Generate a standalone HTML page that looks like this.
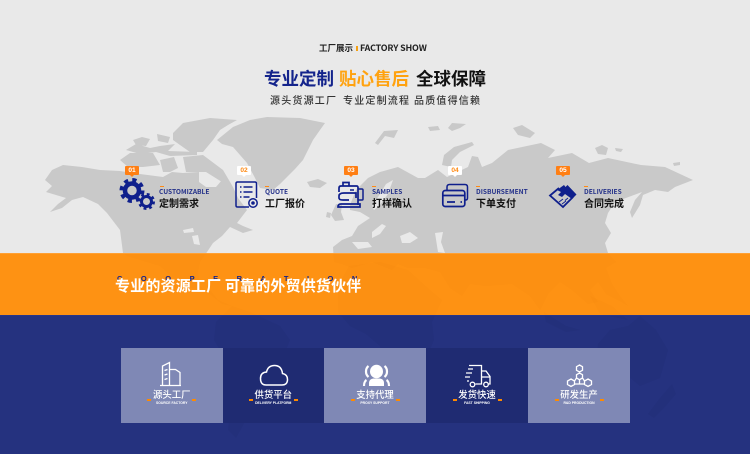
<!DOCTYPE html>
<html lang="zh"><head><meta charset="utf-8"><style>
html,body{margin:0;padding:0}
body{width:750px;height:454px;overflow:hidden;position:relative;background:#e9e9e9;font-family:"Liberation Sans","Noto Sans CJK SC",sans-serif}
svg.bg,svg.ic{position:absolute;left:0;top:0}
.t{position:absolute;white-space:nowrap;font-family:"Noto Sans CJK SC","Liberation Sans",sans-serif;line-height:1}
.badge{position:absolute;top:166px;width:14px;height:9px;border-radius:1px;background:#ff7f14;color:#fff;font:700 6.6px/9px "Liberation Sans",sans-serif;text-align:center}
.badge:after{content:"";position:absolute;left:5px;top:9px;border:2px solid transparent;border-top-color:#ff7f14;border-bottom:0}
.badge.w{background:#fff;color:#ff8a14}.badge.w:after{border-top-color:#fff}
.bar{position:absolute;top:186px;width:4px;height:1px;background:#ff8a14}
.en{top:188.3px;font-size:6.6px;font-weight:700;color:#25328a}
.cn{top:198px;font-size:10px;font-weight:700;color:#111}
.card{position:absolute;top:348px;height:75px}
.cl{position:absolute;left:0;right:0;top:41px;text-align:center;color:#fff;font:500 9.4px/11px "Noto Sans CJK SC",sans-serif}
.cs{position:absolute;left:0;right:0;top:53px;text-align:center;color:#fff;font:700 3.4px/5px "Liberation Sans",sans-serif}
.d{position:absolute;top:51px;width:4px;height:2px;background:#ff8a00}
</style></head><body>
<svg class="bg" width="750" height="454" viewBox="0 0 750 454">
<defs><g id="m">
<path d="M45 180L52 170 63 165 82 167 100 170 120 171 140 174 163 177 172 172 183 173 199 172 199 182 206 187 216 187 222 180 233 187 238 198 247 210 237 223 243 226 253 230 243 233 230 227 222 236 213 243 207 252 200 262 198 272 200 286 212 296 222 304 232 306 218 300 210 290 190 288 176 280 160 266 127 256 123 253 120 230 107 213 98 204 83 197 72 200 62 208 50 212 58 204 66 198 56 195 46 192 52 186Z"/>
<path d="M217 140L233 127 250 120 267 117 300 118 325 123 320 130 313 140 308 150 303 160 295 169 287 177 280 184 273 190 260 188 254 176 247 163 240 155 233 147 222 144Z"/>
<path d="M173 133L183 123 210 118 237 120 228 125 220 130 213 140 203 152 190 152 180 145 173 140Z"/>
<path d="M133 140L142 137 150 139 146 146 136 145ZM157 134L170 137 168 143 158 141ZM126 150L136 144 150 148 160 146 175 144 168 151 197 152 197 155 170 156 156 152 140 154Z"/>
<path d="M120 160L130 153 153 153 160 165 143 167 128 167ZM160 160L174 157 178 168 170 172 163 172ZM183 157L203 155 223 170 233 187 222 182 206 172 197 172 186 172Z"/>
<path d="M307 182L318 179 327 183 320 188 310 187Z"/><path d="M331 215L336 204 342 205 341 212 344 220 335 221Z"/><path d="M327 212L331 213 330 218 326 217Z"/>
<path d="M350 205L356 190 368 178 380 172 398 167 418 178 425 178 438 170 447 177 468 167 472 156 478 157 482 167 492 163 508 150 541 143 555 150 548 158 572 153 589 163 608 158 641 165 665 167 693 180 675 187 668 192 655 190 643 195 640 205 632 218 630 212 635 200 642 192 615 202 608 213 605 223 611 233 605 243 608 253 616 262 606 268 612 284 620 296 628 306 618 300 606 294 598 282 590 290 598 302 588 304 572 290 560 282 548 294 540 310 530 296 512 284 486 286 470 284 462 296 450 288 440 272 425 268 408 268 398 264 392 270 372 262 352 268 342 264 334 262 333 247 342 240 352 236 358 226 370 218 360 212 350 210Z"/>
<path d="M349 266L380 262 408 270 430 290 442 300 432 322 434 340 420 372 406 400 392 402 384 376 380 346 366 334 350 326 338 312 338 286Z"/>
<path d="M232 306L250 312 280 326 290 340 278 370 262 392 246 420 236 438 228 430 232 400 226 360 214 340 216 322Z"/>
<path d="M610 330L628 326 640 316 656 330 668 350 660 378 640 386 628 376 606 382 596 370 598 344Z"/><path d="M590 296L612 306 628 320 600 314ZM544 312L566 326 580 330 566 332 546 322Z"/>
<path d="M648 414L660 398 672 384 676 394 664 408 654 418Z"/>
<path d="M375 143L384 131 398 130 394 138 385 136 378 145Z"/><path d="M428 127L438 126 440 130 430 131ZM448 128L452 123 466 124 460 128 452 131Z"/><path d="M513 128L522 125 535 133 530 138 518 135Z"/><path d="M442 165L444 155 454 147 472 142 474 145 460 152 452 160 451 167Z"/><path d="M595 148L602 145 608 148 606 155 598 154ZM615 148L623 149 621 152 616 151ZM673 163L680 162 680 165 674 166Z"/>
</g></defs>
<use href="#m" fill="#c9c9c9"/>
<path d="M400 236L410 232 418 238 410 243 402 243ZM435 233L443 232 441 242 445 253 438 252ZM372 232L382 224 386 226 380 234 372 238ZM352 242L368 242 372 247 358 249ZM393 180L388 194 380 205 374 210 372 206 380 194 386 184Z" fill="#e9e9e9"/>
<path d="M183 230L193 228 194 232 184 233ZM192 236L198 235 200 245 194 244Z" fill="#e9e9e9"/>
<rect y="253" width="750" height="62" fill="#fe9213"/><rect y="253" width="750" height="1" fill="#ffa033"/>
<rect y="315" width="750" height="139" fill="#25327f"/><rect y="315" width="750" height="1" fill="#27358a"/>
<clipPath id="o"><rect y="254" width="750" height="61"/></clipPath><clipPath id="b"><rect y="316" width="750" height="138"/></clipPath>
<g clip-path="url(#o)"><use href="#m" fill="#e88411" fill-opacity=".08"/></g>
<g clip-path="url(#b)"><use href="#m" fill="#1d2a70" fill-opacity=".2"/></g>
</svg>

<div class="t" style="left:319px;top:43.5px;font-size:8.5px;font-weight:700;color:#222">工厂展示</div>
<div style="position:absolute;left:356px;top:46px;width:1.5px;height:5px;background:#f5a114"></div>
<div class="t" style="left:360px;top:43.500px;font-size:8.9px;font-weight:700;color:#222;letter-spacing:-.15px">FACTORY SHOW</div>
<div class="t" style="left:264px;top:70px;font-size:17.5px;font-weight:700;color:#14248c">专业定制</div>
<div class="t" style="left:339px;top:70px;font-size:17.5px;font-weight:700;color:#ffa20f">贴心售后</div>
<div class="t" style="left:416px;top:70px;font-size:17.5px;font-weight:700;color:#111">全球保障</div>
<div class="t" style="left:270px;top:95px;font-size:10px;letter-spacing:1.2px;font-weight:500;color:#333">源头货源工厂</div>
<div class="t" style="left:343px;top:95px;font-size:10px;letter-spacing:1.2px;font-weight:500;color:#333">专业定制流程</div>
<div class="t" style="left:414px;top:95px;font-size:10px;letter-spacing:1.2px;font-weight:500;color:#333">品质值得信赖</div>

<div class="badge" style="left:125px">01</div><div class="badge w" style="left:237px">02</div><div class="badge" style="left:344px">03</div><div class="badge w" style="left:448px">04</div><div class="badge" style="left:556px">05</div>

<svg class="ic" width="750" height="260" viewBox="0 0 750 260" fill="none" stroke="#0f1f8c">
<circle cx="132" cy="190.500" r="7" stroke-width="4.500"/><circle cx="132" cy="190.500" r="10.700" stroke-width="3.600" stroke-dasharray="4.200 4.200"/>
<circle cx="146.500" cy="201.500" r="5" stroke-width="3"/><circle cx="146.500" cy="201.500" r="7.200" stroke-width="2.600" stroke-dasharray="2.830 2.830"/>
<path d="M256.500 198V183.500Q256.500 182 255 182H237.500Q236 182 236 183.500V205.500Q236 207 237.500 207H249" stroke-width="1.500"/>
<path d="M240 187h1.500M243.500 187h9M240 192h1.500M243.500 192h9M240 197h1.500M243.500 197h6" stroke-width="1.500"/>
<circle cx="253" cy="203" r="4.200" stroke-width="1.500" fill="#e9e9e9"/><circle cx="253" cy="203" r="1.800" fill="#0f1f8c" stroke="none"/>
<path d="M339 192v-4q0-2 2-2h15.500q1.500 0 1.500 1.500V205M343 186v-3.500h6V186" stroke-width="1.700"/>
<path d="M358.500 189h3.500q1 0 1 1v9q0 1-1 1h-3.500M350 190h4" stroke-width="1.500"/>
<path d="M356 198V193h-12q-5 0-5 3v2q0 2 4 2h6M338 207q0-3 3-3h19v3Z" stroke-width="1.700"/>
<path d="M447 190v-3q0-2.500 2.500-2.500H465q2.500 0 2.500 2.500v11q0 2-2 2" stroke-width="1.500"/>
<rect x="442.800" y="190.500" width="22" height="16" rx="2.500" stroke-width="1.700"/>
<path d="M443 195.500h21.500M447 202h8M460.500 202h1.500" stroke-width="1.700"/>
<path d="M559 188L550 195.500 563 207 573 197" stroke-width="1.800"/>
<path d="M557 190l7-5 1.500 2 2-2 9 9.500-4.500 4.500-7-5-3 3-4-2 3-3Z" fill="#0f1f8c" stroke="none"/>
<path d="M559 202l4-3M562 204l4-3M565 200.500l3-2.500" stroke-width="1"/>
</svg>

<div class="bar" style="left:160px"></div><div class="bar" style="left:265px"></div><div class="bar" style="left:372px"></div><div class="bar" style="left:476px"></div><div class="bar" style="left:584px"></div>
<div class="t en" style="left:159px">CUSTOMIZABLE</div><div class="t cn" style="left:159px">定制需求</div>
<div class="t en" style="left:265px">QUOTE</div><div class="t cn" style="left:265px">工厂报价</div>
<div class="t en" style="left:372px">SAMPLES</div><div class="t cn" style="left:372px">打样确认</div>
<div class="t en" style="left:476px">DISBURSEMENT</div><div class="t cn" style="left:476px">下单支付</div>
<div class="t en" style="left:584px">DELIVERIES</div><div class="t cn" style="left:584px">合同完成</div>

<div class="t" style="left:117px;top:275px;font:700 7.500px/8px 'Liberation Sans',sans-serif;letter-spacing:18.500px;color:#14248c">COOPERATION</div>
<div class="t" style="left:115px;top:278px;font-size:15px;font-weight:700;color:#fff;letter-spacing:.18px">专业的资源工厂 可靠的外贸供货伙伴</div>

<div class="card" style="left:121px;width:101.500px;background:#7f88b5"><div class="cl">源头工厂</div><div class="cs">SOURCE FACTORY</div><i class="d" style="left:26px"></i><i class="d" style="left:71px"></i></div>
<div class="card" style="left:222.500px;width:101.500px;background:#1f2b72"><div class="cl">供货平台</div><div class="cs">DELIVERY PLATFORM</div><i class="d" style="left:26px"></i><i class="d" style="left:71px"></i></div>
<div class="card" style="left:324px;width:102px;background:#7f88b5"><div class="cl">支持代理</div><div class="cs">PROXY SUPPORT</div><i class="d" style="left:27px"></i><i class="d" style="left:72px"></i></div>
<div class="card" style="left:426px;width:102px;background:#1f2b72"><div class="cl">发货快速</div><div class="cs">FAST SHIPPING</div><i class="d" style="left:27px"></i><i class="d" style="left:72px"></i></div>
<div class="card" style="left:528px;width:102px;background:#7f88b5"><div class="cl">研发生产</div><div class="cs">R&amp;D PRODUCTION</div><i class="d" style="left:27px"></i><i class="d" style="left:72px"></i></div>

<svg class="ic" width="750" height="454" viewBox="0 0 750 454" fill="none" stroke="#fff" stroke-width="1.300" style="pointer-events:none">
<path d="M160 385.500h21M162.500 385V366l7-3.500V385M169.500 369.500h6l4.500 3V385M164.500 370.500l3-1M164.500 375l3-1M164.500 379.500l3-1"/>
<path d="M266 385h16q5.500 0 5.500-5.500 0-5-5-6-1-8-8-8-6.500 0-8 6.500-6 .5-6 6.500 0 6.500 5.500 6.500Z" stroke-width="1.500"/>
<ellipse cx="376.500" cy="371.500" rx="6.500" ry="6.800" fill="#fff" stroke="none"/>
<path d="M368.500 366q-2.500 2-2.500 5.500t2.500 5.500M384.500 366q2.500 2 2.500 5.500t-2.500 5.500" stroke-width="2.200"/>
<path d="M369 386v-3q0-4 4.500-4.500h6q4.500.5 4.500 4.500v3Z" fill="#fff" stroke="none"/>
<path d="M366.500 380q-2.500 1.500-2.500 6M386.500 380q2.500 1.500 2.500 6" stroke-width="2.200"/>
<path d="M469 365.500h12.500V384h-6M473 369h-5M472 373h-6M470 377h-5M469 381h-2M481.500 371h4.500l4 5.500V384h-1.500M481.500 377h8M481 384h-1"/>
<circle cx="472.500" cy="384.500" r="2.300"/><circle cx="486" cy="384.500" r="2.300"/>
<path d="M579.500 365l3 1.700v3.600l-3 1.700-3-1.700v-3.600ZM571 379l3.500 2v3.500l-3.500 2-3.500-2V381ZM588 379l3.500 2v3.500l-3.500 2-3.500-2V381ZM579.500 373l3 1.700v3.300l-3 1.700-3-1.700v-3.300ZM576.500 378l-2 3M582.500 378l2 3M574.500 384h10M579.500 380v4"/>
</svg>
</body></html>
